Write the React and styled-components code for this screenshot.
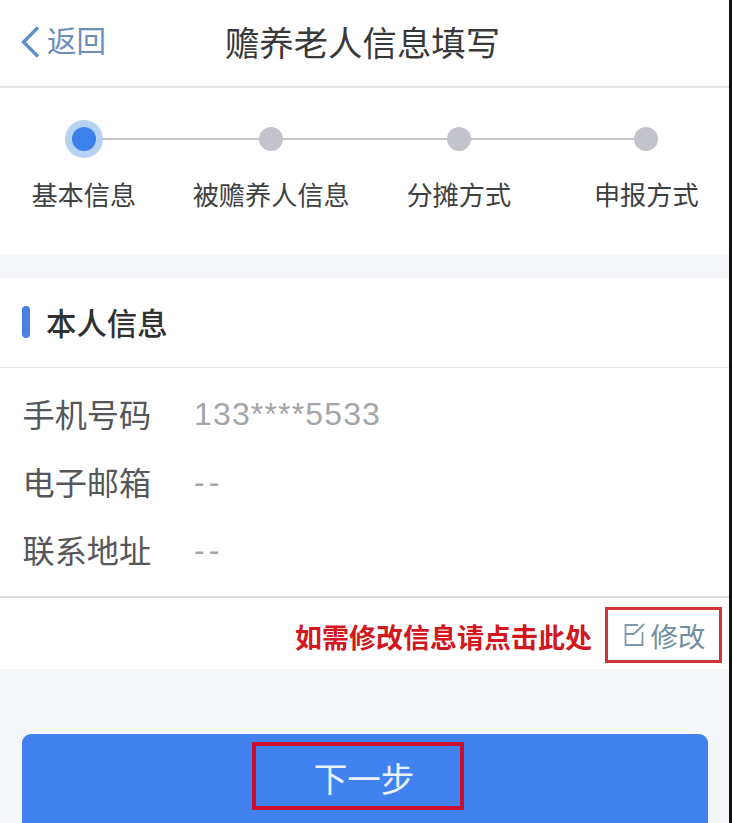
import React from 'react'
import styled, { createGlobalStyle } from 'styled-components'

const GlobalStyle = createGlobalStyle`
  html, body {
    margin: 0;
    padding: 0;
    background: #111;
  }
  body {
    width: 732px;
    height: 823px;
    overflow: hidden;
    font-family: "Liberation Sans", "Noto Sans CJK SC", sans-serif;
  }
`

const Page = styled.div`
  width: 729px;
  height: 823px;
  overflow: hidden;
  background: #f4f6f9;
`

const Header = styled.header`
  height: 86px;
  display: flex;
  align-items: center;
  justify-content: center;
  position: relative;
  background: #fff;
  border-bottom: 2px solid #e4e4e6;
`

const BackLink = styled.a`
  position: absolute;
  left: 20px;
  top: 24px;
  display: flex;
  align-items: center;
  gap: 6px;
  font-size: 29.5px;
  line-height: 36px;
  color: #6d8fbb;
`

const Title = styled.h1`
  margin: 0 0 4px -4px;
  font-size: 34.4px;
  font-weight: 400;
  color: #38393b;
`

const Steps = styled.section`
  height: 166px;
  background: #fff;
  overflow: hidden;
`

const StepList = styled.div`
  display: grid;
  grid-template-columns: repeat(4, 187.5px);
  margin-left: -10px;
  padding-top: 33px;
`

const Step = styled.div`
  position: relative;
  display: flex;
  flex-direction: column;
  align-items: center;
  &:not(:last-child)::after {
    content: '';
    position: absolute;
    top: 17px;
    left: 50%;
    width: 100%;
    height: 2px;
    background: #c4c4c8;
  }
`

const Dot = styled.span`
  position: relative;
  z-index: 1;
  width: 24px;
  height: 24px;
  margin: 6px;
  border-radius: 50%;
  background: ${(p) => (p.$active ? '#3c80ec' : '#c3c3cb')};
  box-shadow: ${(p) => (p.$active ? '0 0 0 7px #b5d2f2' : 'none')};
`

const StepLabel = styled.span`
  margin-top: 22px;
  font-size: 26.2px;
  line-height: 34px;
  white-space: nowrap;
  color: #3f4042;
`

const Card = styled.section`
  margin-top: 24px;
  background: #fff;
`

const CardTitle = styled.div`
  height: 90px;
  display: flex;
  align-items: center;
  gap: 16px;
  padding: 0 0 1px 22px;
  box-sizing: border-box;
  border-bottom: 1px solid #e6e6e8;
  font-size: 30.4px;
  font-weight: 500;
  color: #303133;
  &::before {
    content: '';
    width: 8px;
    height: 32px;
    border-radius: 4px;
    background: #4580e6;
  }
`

const InfoList = styled.dl`
  margin: 0;
  padding: 12px 0 12px 22.5px;
  border-bottom: 2px solid #d9d9db;
`

const InfoRow = styled.div`
  height: 68px;
  display: flex;
  align-items: center;
`

const InfoLabel = styled.dt`
  width: 171.5px;
  padding-bottom: 2px;
  font-size: 32.2px;
  color: #55575b;
`

const InfoValue = styled.dd`
  margin: 0;
  font-size: 32px;
  letter-spacing: ${(p) => (p.$empty ? '4px' : '1.15px')};
  color: #a3a5a9;
`

const CardFooter = styled.div`
  height: 71px;
  display: flex;
  align-items: center;
  justify-content: flex-end;
  gap: 13px;
  padding-right: 7px;
`

const Hint = styled.span`
  padding-top: 5px;
  font-size: 27px;
  font-weight: 700;
  color: #d2171d;
`

const EditButton = styled.button`
  width: 117px;
  height: 56px;
  margin-top: 2px;
  display: flex;
  align-items: center;
  justify-content: center;
  gap: 5px;
  padding: 0 0 0 2px;
  background: #fff;
  border: 3px solid #cf3438;
  font-family: inherit;
  font-size: 27.4px;
  color: #6f8ea3;
`

const NextButton = styled.div`
  height: 120px;
  margin: 65px 21px 0 22px;
  display: flex;
  justify-content: center;
  padding-top: 8px;
  box-sizing: border-box;
  border-radius: 9px;
  background: #4282f0;
`

const NextLabel = styled.span`
  width: 212px;
  height: 68px;
  box-sizing: border-box;
  display: flex;
  align-items: center;
  justify-content: center;
  margin-right: 14px;
  padding: 2px 0 0 12px;
  border: 4px solid #c8102e;
  font-size: 33.6px;
  color: #e8f1fd;
`

function BackIcon() {
  return (
    <svg width="21" height="34" viewBox="0 0 21 34" fill="none">
      <path d="M18 2.5 3.5 17 18 31.5" stroke="#5f8fca" strokeWidth="3.4" />
    </svg>
  )
}

function EditIcon() {
  return (
    <svg width="22" height="24" viewBox="0 0 22 24" fill="none" stroke="#7d99ab" strokeWidth="1.8">
      <path d="M14 2H1.5v20h17V9" />
      <path d="M1.5 11h8.5M10 11l10-10" />
    </svg>
  )
}

const STEPS = ['基本信息', '被赡养人信息', '分摊方式', '申报方式']

const INFO = [
  { label: '手机号码', value: '133****5533' },
  { label: '电子邮箱', value: '--' },
  { label: '联系地址', value: '--' },
]

export default function App() {
  return (
    <Page>
      <GlobalStyle />
      <Header>
        <BackLink>
          <BackIcon />
          返回
        </BackLink>
        <Title>赡养老人信息填写</Title>
      </Header>
      <Steps>
        <StepList>
          {STEPS.map((step, i) => (
            <Step key={step}>
              <Dot $active={i === 0} />
              <StepLabel>{step}</StepLabel>
            </Step>
          ))}
        </StepList>
      </Steps>
      <Card>
        <CardTitle>本人信息</CardTitle>
        <InfoList>
          {INFO.map((row) => (
            <InfoRow key={row.label}>
              <InfoLabel>{row.label}</InfoLabel>
              <InfoValue $empty={row.value === '--'}>{row.value}</InfoValue>
            </InfoRow>
          ))}
        </InfoList>
        <CardFooter>
          <Hint>如需修改信息请点击此处</Hint>
          <EditButton>
            <EditIcon />
            修改
          </EditButton>
        </CardFooter>
      </Card>
      <NextButton>
        <NextLabel>下一步</NextLabel>
      </NextButton>
    </Page>
  )
}
